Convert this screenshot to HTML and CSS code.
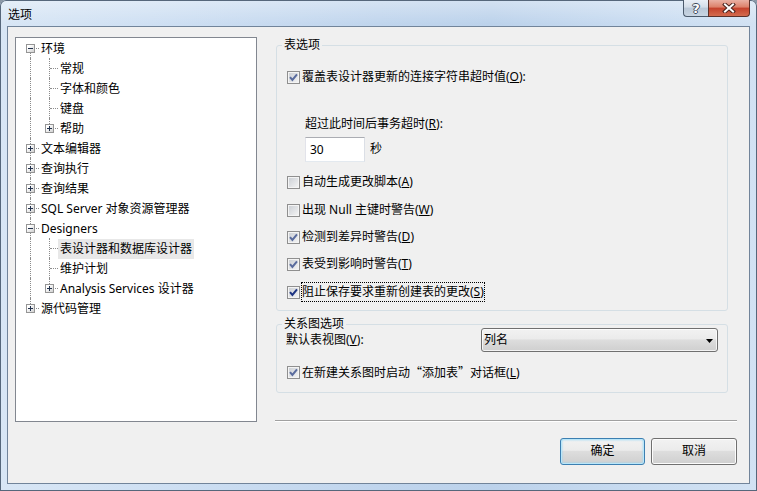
FILE: index.html
```html
<!DOCTYPE html>
<html lang="zh-CN">
<head>
<meta charset="utf-8">
<title>选项</title>
<link rel="stylesheet" href="styles.css">
</head>
<body>
<div class="window">
  <div class="titlebar">
    <span class="title">选项</span>
    <div class="caps">
      <button class="cap help"><span class="q">?</span></button>
      <button class="cap close">
        <svg width="14" height="10" viewBox="0 0 14 10"><path d="M3 1.5 L11 8.5 M11 1.5 L3 8.5" stroke="#4a241e" stroke-width="4" stroke-linecap="square" fill="none"/><path d="M3 1.5 L11 8.5 M11 1.5 L3 8.5" stroke="#ffffff" stroke-width="2" stroke-linecap="square" fill="none"/></svg>
      </button>
    </div>
  </div>
  <div class="client">
    <div class="main">
      <div class="tree">
        <div class="row"><span class="g first"><i class="exp"></i></span><span class="lbl">环境</span></div>
        <div class="row"><span class="g v"></span><span class="g"></span><span class="lbl">常规</span></div>
        <div class="row"><span class="g v"></span><span class="g"></span><span class="lbl">字体和颜色</span></div>
        <div class="row"><span class="g v"></span><span class="g"></span><span class="lbl">键盘</span></div>
        <div class="row"><span class="g v"></span><span class="g end"><i class="exp plus"></i></span><span class="lbl">帮助</span></div>
        <div class="row"><span class="g"><i class="exp plus"></i></span><span class="lbl">文本编辑器</span></div>
        <div class="row"><span class="g"><i class="exp plus"></i></span><span class="lbl">查询执行</span></div>
        <div class="row"><span class="g"><i class="exp plus"></i></span><span class="lbl">查询结果</span></div>
        <div class="row"><span class="g"><i class="exp plus"></i></span><span class="lbl">SQL Server 对象资源管理器</span></div>
        <div class="row"><span class="g"><i class="exp"></i></span><span class="lbl">Designers</span></div>
        <div class="row"><span class="g v"></span><span class="g"></span><span class="lbl sel">表设计器和数据库设计器</span></div>
        <div class="row"><span class="g v"></span><span class="g"></span><span class="lbl">维护计划</span></div>
        <div class="row"><span class="g v"></span><span class="g end"><i class="exp plus"></i></span><span class="lbl">Analysis Services 设计器</span></div>
        <div class="row"><span class="g end"><i class="exp plus"></i></span><span class="lbl">源代码管理</span></div>
      </div>
      <div class="panel">
        <fieldset class="group g1">
          <legend>表选项</legend>
          <div class="cbrow r1"><span class="cb"><svg class="ck" viewBox="0 0 11 11" width="11" height="11"><path d="M2 5.2 L4.4 8 L9 2.3" fill="none" stroke="currentColor" stroke-width="2"/></svg></span><span class="txt">覆盖表设计器更新的连接字符串超时值(<u>O</u>):</span></div>
          <div class="timeout">超过此时间后事务超时(<u>R</u>):</div>
          <div class="numrow"><input class="num" type="text" value="30"><span class="sec">秒</span></div>
          <div class="cbrow rA"><span class="cb"></span><span class="txt">自动生成更改脚本(<u>A</u>)</span></div>
          <div class="cbrow rW"><span class="cb"></span><span class="txt">出现 Null 主键时警告(<u>W</u>)</span></div>
          <div class="cbrow rD"><span class="cb"><svg class="ck" viewBox="0 0 11 11" width="11" height="11"><path d="M2 5.2 L4.4 8 L9 2.3" fill="none" stroke="currentColor" stroke-width="2"/></svg></span><span class="txt">检测到差异时警告(<u>D</u>)</span></div>
          <div class="cbrow rT"><span class="cb"><svg class="ck" viewBox="0 0 11 11" width="11" height="11"><path d="M2 5.2 L4.4 8 L9 2.3" fill="none" stroke="currentColor" stroke-width="2"/></svg></span><span class="txt">表受到影响时警告(<u>T</u>)</span></div>
          <div class="cbrow rS focus"><span class="cb"><svg class="ck" viewBox="0 0 11 11" width="11" height="11"><path d="M2 5.2 L4.4 8 L9 2.3" fill="none" stroke="currentColor" stroke-width="2"/></svg></span><span class="txt">阻止保存要求重新创建表的更改(<u>S</u>)</span></div>
        </fieldset>
        <fieldset class="group g2">
          <legend>关系图选项</legend>
          <div class="comborow"><span class="clabel">默认表视图(<u>V</u>):</span><div class="combo"><span>列名</span><svg width="7" height="4" viewBox="0 0 7 4"><path d="M0 0H7L3.5 4Z" fill="#000"/></svg></div></div>
          <div class="cbrow rL"><span class="cb"><svg class="ck" viewBox="0 0 11 11" width="11" height="11"><path d="M2 5.2 L4.4 8 L9 2.3" fill="none" stroke="currentColor" stroke-width="2"/></svg></span><span class="txt">在新建关系图时启动<span class="cjk">“</span>添加表<span class="cjk">”</span>对话框(<u>L</u>)</span></div>
        </fieldset>
        <div class="sep"></div>
      </div>
    </div>
    <div class="buttons">
      <button class="btn default">确定</button>
      <button class="btn">取消</button>
    </div>
  </div>
</div>
</body>
</html>
```
FILE: styles.css
```css
* { box-sizing: border-box; }
html, body { margin: 0; padding: 0; }
body {
  width: 757px;
  height: 491px;
  overflow: hidden;
  background: #8a97a6;
  font: 12px/1.2 "Noto Sans", "Noto Sans CJK SC", sans-serif;
  color: #000;
}
.window {
  width: 757px;
  height: 491px;
  display: flex;
  flex-direction: column;
  padding: 0 7px 7px;
  border-radius: 6px 6px 0 0;
  background:
    linear-gradient(to bottom, rgba(255,255,255,0.35), rgba(255,255,255,0) 24px),
    linear-gradient(to right, #d8e6f5 0%, #cfe0f3 20%, #c0d5ed 50%, #bcd2eb 65%, #c9dcf1 85%, #d2e2f3 100%);
  box-shadow: inset 0 0 0 1px #56677b;
}
.titlebar {
  flex: none;
  height: 26px;
  display: flex;
  justify-content: space-between;
  align-items: flex-start;
}
.title {
  padding-left: 1px;
  line-height: 28px;
  font-size: 12px;
  font-family: "Noto Sans CJK SC", sans-serif;
}
.caps { display: flex; }
.cap {
  height: 17px;
  margin: 0;
  padding: 0;
  border: 1px solid #4b5a6c;
  border-top: 0;
  display: flex;
  align-items: center;
  justify-content: center;
  font: inherit;
}
.cap.help {
  width: 25px;
  border-right: 0;
  border-radius: 0 0 0 4px;
  background: linear-gradient(#e9eff6 0%, #d3dde8 45%, #b9c7d7 50%, #c8d5e3 100%);
}
.cap.close {
  width: 42px;
  border-color: #5b3029;
  border-radius: 0 0 4px 0;
  background: linear-gradient(#eab1a4 0%, #dc8069 45%, #c4412b 50%, #d36c4f 100%);
}
.q {
  color: #fff;
  font: bold 13px/1 "DejaVu Sans", sans-serif;
  text-shadow: 1px 0 #3e4b5c, -1px 0 #3e4b5c, 0 1px #3e4b5c, 0 -1px #3e4b5c;
}
.cap svg { display: block; }

.client {
  flex: 1;
  background: #f0f0f0;
  border: 1px solid #71849a;
  padding: 10px 12px 0 7px;
  display: flex;
  flex-direction: column;
}
.main {
  display: flex;
  gap: 18px;
  height: 385px;
  flex: none;
}
.tree {
  width: 242px;
  height: 385px;
  background: #fff;
  border: 1px solid #828790;
  padding: 0 0 0 5px;
}
.row {
  display: flex;
  height: 20px;
}
.g {
  position: relative;
  width: 19px;
  height: 20px;
  flex: none;
}
.g::before {
  content: "";
  position: absolute;
  left: 9px;
  top: 0;
  bottom: 0;
  border-left: 1px dotted #8c8c8c;
}
.g::after {
  content: "";
  position: absolute;
  left: 10px;
  right: 1px;
  top: 10px;
  border-top: 1px dotted #8c8c8c;
}
.g.v::after { display: none; }
.g.first::before { top: 10px; }
.g.end::before { bottom: 10px; }
.exp {
  position: absolute;
  left: 5px;
  top: 6px;
  width: 9px;
  height: 9px;
  border: 1px solid #959595;
  background: linear-gradient(135deg, #ffffff 25%, #d0d0d0 100%);
  z-index: 1;
}
.exp::before {
  content: "";
  position: absolute;
  left: 1px;
  top: 3px;
  width: 5px;
  height: 1px;
  background: #22324d;
}
.exp.plus::after {
  content: "";
  position: absolute;
  left: 3px;
  top: 1px;
  width: 1px;
  height: 5px;
  background: #22324d;
}
.lbl {
  margin-left: -1px;
  margin-top: 1px;
  padding: 0 2px;
  height: 20px;
  line-height: 20px;
  white-space: nowrap;
}
.lbl.sel { background: #e8e8e8; }

.panel {
  width: 462px;
  display: flex;
  flex-direction: column;
}
.group {
  margin: 1px 0 0 1px;
  width: 452px;
  min-width: 0;
  padding: 0 9px 8px 10px;
  border: 1px solid #d5dfe5;
  border-radius: 3px;
}
.group legend {
  padding: 0 2px;
  margin-left: -5px;
  line-height: 14px;
  font-size: 12px;
}
.g2 {
  margin-top: 6px;
  padding-bottom: 10px;
}
.cbrow {
  display: flex;
  align-items: center;
  height: 20px;
}
.cb {
  flex: none;
  width: 13px;
  height: 13px;
  margin-right: 1px;
  border: 1px solid #8f8f8f;
  background: linear-gradient(135deg, #c9cdd3 0%, #f6f6f6 100%);
  box-shadow: inset 0 0 0 1px #f4f4f4;
  color: #5a6c9e;
}
.ck { display: block; }
.focus .cb { color: #1e3583; }
.txt {
  border: 1px dotted transparent;
  line-height: 18px;
  white-space: nowrap;
}
.focus .txt { border-color: #000; }
.cjk { font-family: "Noto Sans CJK SC", sans-serif; }
.r1 { margin-top: 15px; }
.timeout {
  margin-top: 27px;
  padding-left: 18px;
  line-height: 20px;
}
.numrow {
  margin-top: 3px;
  padding-left: 18px;
  height: 25px;
  display: flex;
  align-items: center;
}
.num {
  width: 60px;
  height: 25px;
  margin: 0;
  padding: 0 0 0 4px;
  border: 1px solid;
  border-color: #abadb3 #dbdfe6 #e3e9ef #e2e3ea;
  background: #fff;
  font: inherit;
  color: #000;
  outline: none;
}
.sec { margin-left: 5px; }
.rA { margin-top: 10px; }
.rW { margin-top: 8px; }
.rD { margin-top: 7px; }
.rT { margin-top: 7px; }
.rS { margin-top: 8px; }
.comborow {
  margin-top: -3px;
  height: 24px;
  display: flex;
  align-items: center;
  justify-content: space-between;
}
.clabel { margin-left: -1px; }
.combo {
  width: 237px;
  height: 24px;
  border: 1px solid #707070;
  border-radius: 3px;
  background: linear-gradient(#f2f2f2 0%, #ebebeb 45%, #dddddd 50%, #cfcfcf 100%);
  box-shadow: inset 0 0 0 1px rgba(255,255,255,0.75);
  display: flex;
  align-items: center;
  justify-content: space-between;
  padding: 0 4px 0 2px;
}
.combo svg { display: block; margin-top: 2px; }
.rL { margin-top: 10px; }
.sep {
  margin-top: auto;
  height: 2px;
  border-top: 1px solid #a0a0a0;
  border-bottom: 1px solid #ffffff;
}
.buttons {
  display: flex;
  justify-content: flex-end;
  gap: 6px;
  margin-top: 16px;
}
.btn {
  width: 86px;
  height: 27px;
  margin: 0;
  padding: 0;
  border: 1px solid #707070;
  border-radius: 3px;
  background: linear-gradient(#f2f2f2 0%, #ebebeb 45%, #dddddd 50%, #cfcfcf 100%);
  box-shadow: inset 0 0 0 1px #fcfcfc;
  font: inherit;
  color: #000;
}
.btn.default {
  width: 85px;
  border-color: #3c7fb1;
  box-shadow: inset 0 0 0 1px #b9e6f9, inset 0 0 2px 1px #8fd6f5;
}
```
